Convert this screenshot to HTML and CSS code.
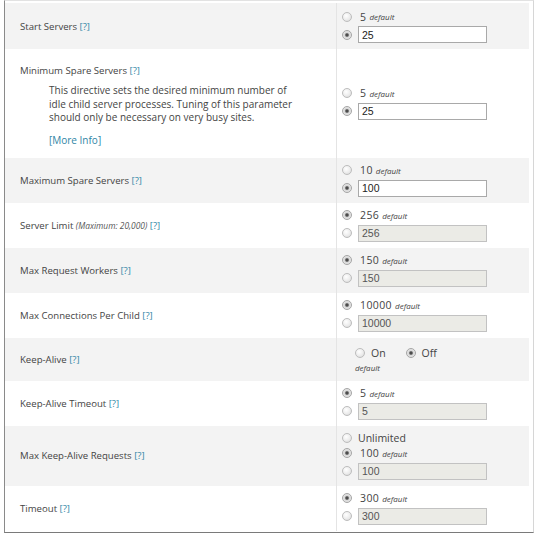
FILE: index.html
```html
<!DOCTYPE html>
<html>
<head>
<meta charset="utf-8">
<link rel="stylesheet" href="styles.css">
</head>
<body>
<div class="panel">
<table class="opts">
  <tr class="alt first">
    <td class="lbl">Start Servers <a class="help">[?]</a></td>
    <td class="val">
      <div class="line"><span class="radio"></span><span class="num">5</span><i class="def">default</i></div>
      <div class="line"><span class="radio on"></span><span class="inp">25</span></div>
    </td>
  </tr>
  <tr>
    <td class="lbl top">Minimum Spare Servers <a class="help">[?]</a>
      <p class="desc">This directive sets the desired minimum number of idle child server processes. Tuning of this parameter should only be necessary on very busy sites.</p>
      <p class="more"><a class="help">[More Info]</a></p>
    </td>
    <td class="val">
      <div class="line"><span class="radio"></span><span class="num">5</span><i class="def">default</i></div>
      <div class="line"><span class="radio on"></span><span class="inp">25</span></div>
    </td>
  </tr>
  <tr class="alt">
    <td class="lbl">Maximum Spare Servers <a class="help">[?]</a></td>
    <td class="val">
      <div class="line"><span class="radio"></span><span class="num">10</span><i class="def">default</i></div>
      <div class="line"><span class="radio on"></span><span class="inp">100</span></div>
    </td>
  </tr>
  <tr>
    <td class="lbl">Server Limit <i class="note">(Maximum: 20,000)</i> <a class="help">[?]</a></td>
    <td class="val">
      <div class="line"><span class="radio on"></span><span class="num">256</span><i class="def">default</i></div>
      <div class="line"><span class="radio"></span><span class="inp dis">256</span></div>
    </td>
  </tr>
  <tr class="alt">
    <td class="lbl">Max Request Workers <a class="help">[?]</a></td>
    <td class="val">
      <div class="line"><span class="radio on"></span><span class="num">150</span><i class="def">default</i></div>
      <div class="line"><span class="radio"></span><span class="inp dis">150</span></div>
    </td>
  </tr>
  <tr>
    <td class="lbl">Max Connections Per Child <a class="help">[?]</a></td>
    <td class="val">
      <div class="line"><span class="radio on"></span><span class="num">10000</span><i class="def">default</i></div>
      <div class="line"><span class="radio"></span><span class="inp dis">10000</span></div>
    </td>
  </tr>
  <tr class="alt">
    <td class="lbl">Keep-Alive <a class="help">[?]</a></td>
    <td class="val">
      <div class="onoff">
        <div class="opt"><div class="line"><span class="radio"></span><span class="word">On</span></div><i class="def sub">default</i></div>
        <div class="opt"><div class="line"><span class="radio on"></span><span class="word">Off</span></div></div>
      </div>
    </td>
  </tr>
  <tr>
    <td class="lbl">Keep-Alive Timeout <a class="help">[?]</a></td>
    <td class="val">
      <div class="line"><span class="radio on"></span><span class="num">5</span><i class="def">default</i></div>
      <div class="line"><span class="radio"></span><span class="inp dis">5</span></div>
    </td>
  </tr>
  <tr class="alt">
    <td class="lbl">Max Keep-Alive Requests <a class="help">[?]</a></td>
    <td class="val">
      <div class="line"><span class="radio"></span><span class="word">Unlimited</span></div>
      <div class="line"><span class="radio on"></span><span class="num">100</span><i class="def">default</i></div>
      <div class="line"><span class="radio"></span><span class="inp dis">100</span></div>
    </td>
  </tr>
  <tr>
    <td class="lbl">Timeout <a class="help">[?]</a></td>
    <td class="val">
      <div class="line"><span class="radio on"></span><span class="num">300</span><i class="def">default</i></div>
      <div class="line"><span class="radio"></span><span class="inp dis">300</span></div>
    </td>
  </tr>
</table>
</div>
</body>
</html>
```

FILE: styles.css
```css
html, body {
  margin: 0;
  padding: 0;
  background: #ffffff;
}
body {
  font-family: "Open Sans", "DejaVu Sans", sans-serif;
  color: #444444;
}
.panel {
  margin: 0 0 0 4px;
  width: 526px;
  border-left: 1px solid #8a8a8a;
  border-top: 1px solid #e2e2e2;
  border-right: 1px solid #d6d6d6;
  border-bottom: 1px solid #7a7a7a;
  padding: 2px 2px 1px 0;
}
.opts {
  width: 524px;
  border-collapse: collapse;
}
.opts td {
  padding: 0;
}
.opts tr.alt td {
  background: #f3f3f3;
}
.lbl {
  width: 316px;
  padding-left: 15px !important;
  font-size: 9.6px;
  vertical-align: middle;
  border-right: 1px solid #e4e4e4;
}
.lbl.top {
  vertical-align: top;
  padding-top: 15px !important;
  padding-bottom: 11px !important;
}
.help {
  color: #2f86a6;
}
.note {
  font-size: 8.4px;
  color: #555;
}
.desc {
  margin: 7px 0 0 29px;
  width: 246px;
  font-size: 10px;
  line-height: 13.6px;
}
.more {
  margin: 8px 0 0 29px;
  font-size: 10px;
}
.val {
  padding: 6px 0 6px 5px !important;
  vertical-align: middle;
}
.first .val {
  padding-top: 7px !important;
}
.line {
  display: flex;
  align-items: center;
  height: 13px;
}
.line + .line {
  margin-top: 2px;
}
.line:has(.inp) {
  height: 17px;
  margin-top: 3px;
}
.radio {
  width: 10px;
  height: 10px;
  border-radius: 50%;
  border: 1px solid #bdbdbd;
  background: radial-gradient(circle at 40% 35%, #ffffff 0%, #ececec 55%, #d2d2d2 100%);
  flex: none;
  margin-right: 6px;
  box-sizing: border-box;
}
.radio.on {
  border-color: #a6a6a6;
  background: radial-gradient(circle at 50% 50%, #3f3f3f 0%, #555 22%, #d8d8d8 42%, #f2f2f2 100%);
}
.num {
  font-size: 10.5px;
  letter-spacing: 0.4px;
  color: #444;
  margin-left: 2px;
}
.word {
  font-size: 10.5px;
  color: #444;
}
.def {
  font-size: 8px;
  color: #444;
  margin-left: 3px;
}
.inp {
  width: 129px;
  height: 17px;
  box-sizing: border-box;
  border: 1px solid #a9a9a9;
  background: #ffffff;
  font-family: "Liberation Sans", Arial, sans-serif;
  font-size: 10.5px;
  color: #222;
  padding: 0 0 0 3px;
  display: flex;
  align-items: center;
}
.inp.dis {
  background: #ebebe6;
  border-color: #c2c2c2;
  color: #555;
}
.onoff {
  display: flex;
  gap: 20px;
  padding: 2px 0 2px 13px;
}
.opt .line {
  height: 14px;
}
.def.sub {
  display: block;
  margin: 2px 0 0 0;
}
```
